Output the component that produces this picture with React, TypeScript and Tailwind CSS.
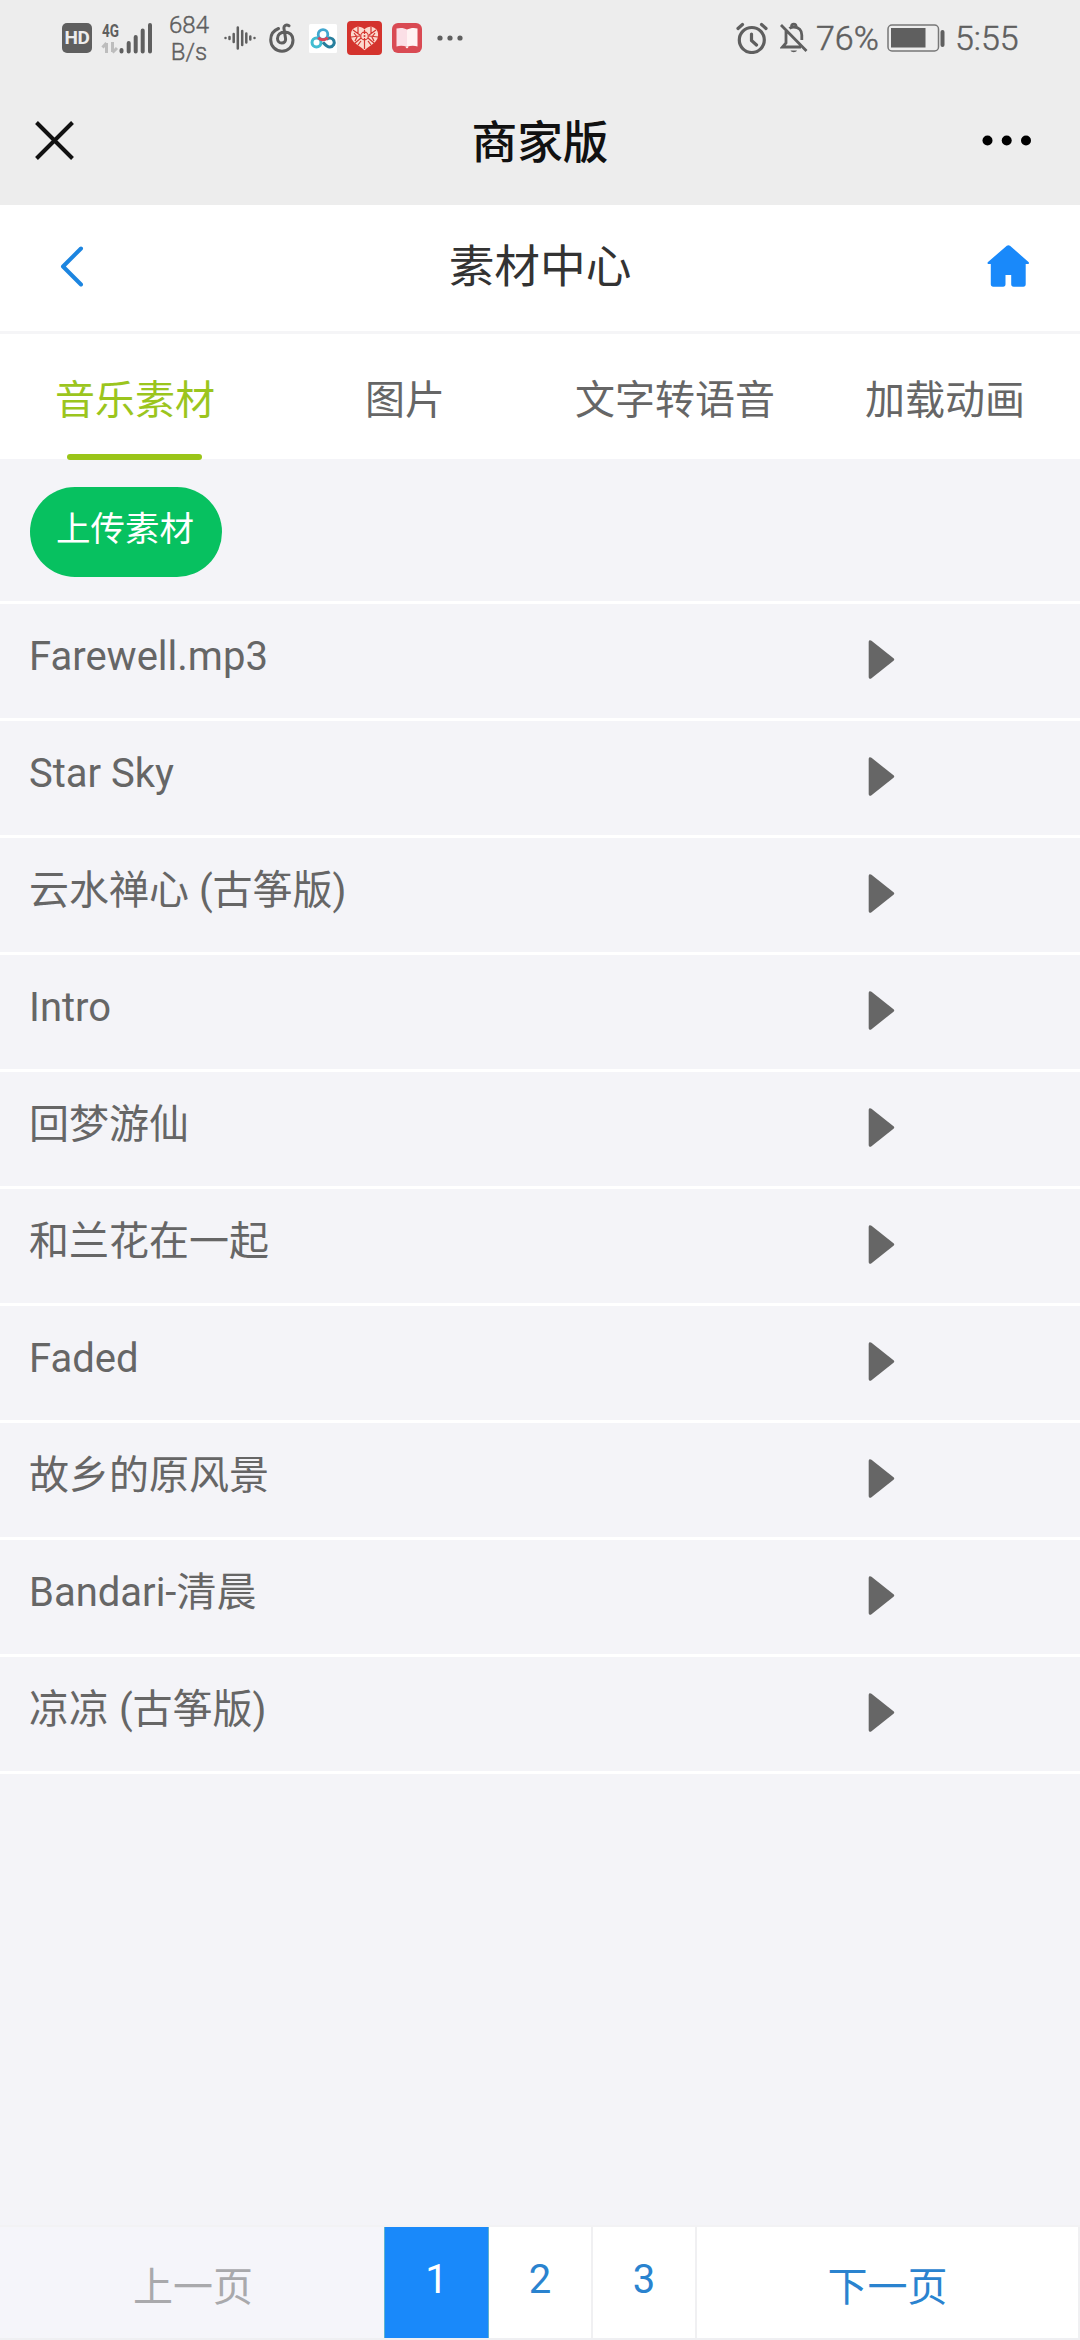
import React from "react";

const songs = [
  "Farewell.mp3",
  "Star Sky",
  "云水禅心 (古筝版)",
  "Intro",
  "回梦游仙",
  "和兰花在一起",
  "Faded",
  "故乡的原风景",
  "Bandari-清晨",
  "凉凉 (古筝版)",
];

const tabs = ["音乐素材", "图片", "文字转语音", "加载动画"];

function SignalIcon() {
  return (
    <svg className="ml-[9px] h-[36px] w-[53px] shrink-0 overflow-visible" viewBox="0 -2 53 36">
      <text x="1" y="14.5" textLength="17" lengthAdjust="spacingAndGlyphs" fontSize="18" fontWeight="700" fill="#5f5f5f" fontFamily="Roboto, sans-serif">4G</text>
      <g stroke="#bdbdbd" strokeWidth="3" fill="none">
        <path d="M5.5 21v10M1.500 25.500l4-4.500" />
        <path d="M11.500 20v10M11.500 30.500l4.500-4.500" />
      </g>
      <g stroke="#5f5f5f" strokeWidth="4" strokeLinecap="round">
        <path d="M20.500 28v1.500M27.700 21v8.500M34.700 15v14.500M41.700 8.500v21M49 3v26.500" />
      </g>
    </svg>
  );
}

function WaveIcon() {
  return (
    <svg className="ml-[14px] h-[24px] w-[32px] shrink-0" viewBox="0 0 32 24" stroke="#5f5f5f" strokeWidth="2.500" strokeLinecap="round">
      <path d="M1.500 12v.1M5.500 11v2M9.700 8v8M18.200 5v14M22.300 7.500v9M26.300 10.500v3M30.500 12v.1M13.800 1.500v21" />
    </svg>
  );
}

function NeteaseIcon() {
  return (
    <svg className="ml-[13px] h-[30px] w-[28px] shrink-0" viewBox="0 0 28 30" fill="none" stroke="#5f5f5f" strokeWidth="3" strokeLinecap="round">
      <path d="M9.500 5.500C4.500 7.500 1.700 12 1.700 16.700c0 6.500 5 11.500 11.300 11.500s11-4.700 11-11.300c0-4.700-3.500-8-8-8-4.700 0-7.500 3-7.500 6.600 0 2.700 1.800 4.600 4.200 4.600 2.700 0 4.300-2 3.800-4.800L15 5.700C14.500 3 17 1 20 2.800" />
    </svg>
  );
}

function CloudIcon() {
  return (
    <svg className="ml-[12px] h-[29px] w-[28px] shrink-0" viewBox="0 0 28 29" fill="none">
      <rect width="28" height="29" rx="1.500" fill="#fff" />
      <circle cx="7.500" cy="18.500" r="4.500" stroke="#42bdd1" strokeWidth="3" />
      <path d="M17.500 15.500c2.300-2.200 6-1.800 7.300 1 1.300 2.900-.5 6.400-3.900 6.500-3 .2-4.400-1.700-6.900-4.700" stroke="#277f9d" strokeWidth="3" />
      <circle cx="14" cy="10.500" r="4.800" stroke="#42a7cf" strokeWidth="2.800" />
      <path d="M9.500 13.500c2 3 7 3 9 0" stroke="#dc4658" strokeWidth="3" />
    </svg>
  );
}

function HeartIcon() {
  return (
    <svg className="ml-[10px] h-[34px] w-[35px] shrink-0" viewBox="0 0 35 34">
      <rect width="35" height="34" rx="4" fill="#d4332d" />
      <path d="M17.500 8.500C14 4 5 5 4 12.500c-.7 6 3 9 7 11.800 3 2 5 3.700 6.500 5 1.500-1.300 3.500-3 6.500-5 4-2.800 7.700-5.800 7-11.800C30 5 21 4 17.500 8.500Z" fill="#fbd9cd" />
      <g stroke="#d4332d" strokeWidth="1.200" fill="none">
        <circle cx="17.500" cy="15" r="3.800" />
        <path d="M17.500 9v4M17.500 17v11M6 9l7 5M29 9l-7 5M4 16l9-1M31 16l-9-1M8 22l6-5M27 22l-6-5M11 6v6M24 6v6M11 24l3-4M24 24l-3-4M7 12l3 4-2 4M28 12l-3 4 2 4" />
      </g>
      <circle cx="17.500" cy="15" r="1" fill="#d4332d" />
    </svg>
  );
}

function BookIcon() {
  return (
    <svg className="ml-[10px] h-[30px] w-[30px] shrink-0" viewBox="0 0 30 30">
      <rect width="30" height="30" rx="6" fill="#d94a53" />
      <path d="M4.500 5.500c4-1 8-.5 10.500 1v17.500c-3-1.300-7-1.500-10.500-.5Z" fill="#fbdfe6" />
      <path d="M15 6.500c3-1.500 7-2 10.500-1v18c-3.500-1-7.500-.8-10.500.5Z" fill="#fff3f3" />
      <path d="M13.500 24h3l-1.500 1.500Z" fill="#fff" />
    </svg>
  );
}

function AlarmIcon() {
  return (
    <svg className="h-[32px] w-[32px] shrink-0" viewBox="0 0 32 32" fill="none" stroke="#5f5f5f" strokeWidth="3.200" strokeLinecap="round">
      <circle cx="15.800" cy="18" r="12.500" />
      <path d="M15.500 12v6.500l5 4.500M2 6.500l4.500-4M30 6.500l-4.500-4" />
    </svg>
  );
}

function MutedBellIcon() {
  return (
    <svg className="ml-[12px] h-[32px] w-[28px] shrink-0" viewBox="0 0 28 32" fill="none" stroke="#5f5f5f" strokeWidth="2.800">
      <path d="M1 3 26.500 29M6 9v12l-3.500 4H21M9.500 6.500C10.500 5.500 12 5 13.800 5c5 0 8 3.500 8 8v5" />
      <path d="M11.500 4.500c0-3.300 4.600-3.300 4.600 0" />
      <path d="M10.500 28.500c1 2.300 5.500 2.300 6.500 0Z" fill="#5f5f5f" stroke="none" />
    </svg>
  );
}

function BatteryIcon() {
  return (
    <svg className="h-[28px] w-[58px] shrink-0" viewBox="0 0 58 28">
      <rect x="1" y="1" width="50.500" height="26" rx="4" fill="none" stroke="#777" strokeWidth="1.500" />
      <rect x="4" y="4" width="34.500" height="19.500" fill="#5f5f5f" />
      <rect x="53.500" y="6" width="4" height="17" rx="2" fill="#5f5f5f" />
    </svg>
  );
}

function StatusBar() {
  return (
    <div className="flex h-[76px] items-center pl-[62px] text-[#5f5f5f]">
      <div className="flex h-[30px] w-[30px] items-center justify-center rounded-[5px] bg-[#5f5f5f] text-[19px] font-bold leading-[24px] tracking-[-0.5px] text-[#ededed]">HD</div>
      <SignalIcon />
      <div className="ml-[14px] mt-[2px] w-[42px] text-center text-[24px] font-light leading-[27px] [-webkit-text-stroke:0.4px_#5f5f5f]">
        <div>684</div>
        <div>B/s</div>
      </div>
      <WaveIcon />
      <NeteaseIcon />
      <CloudIcon />
      <HeartIcon />
      <BookIcon />
      <svg className="ml-[15px] h-[6px] w-[26px] shrink-0" viewBox="0 0 26 6" fill="#5f5f5f">
        <circle cx="3" cy="3" r="2.600" />
        <circle cx="13" cy="3" r="2.600" />
        <circle cx="23" cy="3" r="2.600" />
      </svg>
      <div className="ml-auto flex w-[344px] items-center">
        <AlarmIcon />
        <MutedBellIcon />
        <span className="ml-[8px] w-[71px] whitespace-nowrap text-[34px] font-light leading-[40px] [-webkit-text-stroke:0.5px_#5f5f5f]">76%</span>
        <BatteryIcon />
        <span className="ml-[10px] whitespace-nowrap text-[34px] font-light leading-[40px] [-webkit-text-stroke:0.5px_#5f5f5f]">5:55</span>
      </div>
    </div>
  );
}

function TitleBar() {
  return (
    <div className="flex h-[129px] items-start justify-between pl-[34px] pr-[48px]">
      <svg className="mt-[44px] h-[40px] w-[50px]" viewBox="0 0 50 40" stroke="#111" strokeWidth="4">
        <path d="M2.500 2.500 38.500 38.500M38.500 2.500 2.500 38.500" />
      </svg>
      <h1 className="mr-[-14px] mt-[38px] text-[45.700px] font-medium leading-[60px] text-[#111]">商家版</h1>
      <svg className="mt-[59px] h-[12px] w-[50px]" viewBox="0 0 50 12" fill="#000">
        <circle cx="5.500" cy="5.500" r="5" />
        <circle cx="24.700" cy="5.500" r="5" />
        <circle cx="44" cy="5.500" r="5" />
      </svg>
    </div>
  );
}

function NavBar() {
  return (
    <div className="flex h-[129px] items-center justify-between border-b-3 border-[#f5f5f7] bg-white pl-[59px] pr-[50px]">
      <svg className="mb-[2px] h-[42px] w-[42px]" viewBox="0 0 42 42" fill="none" stroke="#1c85e0" strokeWidth="4" strokeLinecap="round" strokeLinejoin="round">
        <path d="M22 2.500 4 20.500 22 38.500" />
      </svg>
      <h2 className="ml-[-7px] text-[45.700px] leading-[60px] text-[#333]">素材中心</h2>
      <svg className="mb-[4px] h-[44px] w-[44px]" viewBox="0 0 44 44" fill="#1989fa">
        <path d="M20.800 1.800c1-.9 2.200-.9 3.200 0L42.500 18c.9.900.5 2-.8 2h-2v20.300c0 1.600-.8 2.400-2.400 2.400H27.700c-1.700 0-2.500-.8-2.500-2.400V31h-5.700v9.300c0 1.600-.8 2.400-2.400 2.400H7.300c-1.700 0-2.500-.8-2.500-2.400V20h-2c-1.400 0-1.700-1.100-.8-2Z" />
      </svg>
    </div>
  );
}

function Tabs() {
  return (
    <div className="grid h-[125px] grid-cols-4 bg-white">
      {tabs.map((label, i) => (
        <div key={label} className="relative flex justify-center">
          <span className={i === 0 ? "mt-[37px] whitespace-nowrap text-[40px] leading-[60px] text-[#9bc51d]" : "mt-[37px] whitespace-nowrap text-[40px] leading-[60px] text-[#666]"}>{label}</span>
          {i === 0 && <div className="absolute bottom-[-1px] left-[67px] h-[6px] w-[135px] rounded-full bg-[#9ac518]" />}
        </div>
      ))}
    </div>
  );
}

function SongRow({ name }: { name: string }) {
  return (
    <li className="flex h-[117px] items-start border-b-3 border-white">
      <span className="ml-[29px] mt-[23px] w-[839px] text-[40px] leading-[60px] text-[#666]">{name}</span>
      <svg className="mt-[36px] h-[39px] w-[27px]" viewBox="0 0 27 39" fill="#666">
        <path d="M.7 2C.7.200 2.200-.2 3.500.800L25.500 18.300c1 .8 1 1.600 0 2.400L3.500 38.200C2.200 39.200.7 38.800.7 37Z" />
      </svg>
    </li>
  );
}

function Pagination() {
  return (
    <nav className="flex h-[115px] border-y-2 border-t-[#f2f2f4] border-b-[#efeff2] bg-white text-[40px] leading-[60px] text-[#2a83cf]">
      <div className="w-[384px] bg-[#f5f5fa] pt-[31px] text-center text-[#a9a9ac]"><span className="ml-[2px]">上一页</span></div>
      <div className="w-[105px] border-x border-[#5fb3ce] bg-[#1989fa] pt-[23px] text-center text-white">1</div>
      <div className="w-[104px] border-r-2 border-[#f0f0f2] pt-[23px] text-center">2</div>
      <div className="w-[104px] border-r-2 border-[#f0f0f2] pt-[23px] text-center">3</div>
      <div className="flex-1 border-r-2 border-[#f0f0f2] pt-[31px] text-center">下一页</div>
    </nav>
  );
}

export default function App() {
  return (
    <div className="flex h-[2340px] w-[1080px] flex-col overflow-hidden bg-[#f4f4f8] font-['Roboto','Noto_Sans_CJK_SC',sans-serif]" lang="zh-CN">
      <header className="h-[205px] bg-[#ededed]">
        <StatusBar />
        <TitleBar />
      </header>
      <NavBar />
      <Tabs />
      <main className="flex-1">
        <div className="flex h-[145px] border-b-3 border-white pl-[30px] pt-[28px]">
          <button className="h-[90px] w-[192px] rounded-full bg-[#07c160] pb-[6px] pr-[2px] text-[34.500px] leading-[60px] text-white">上传素材</button>
        </div>
        <ul>
          {songs.map((name) => (
            <SongRow key={name} name={name} />
          ))}
        </ul>
      </main>
      <Pagination />
    </div>
  );
}
